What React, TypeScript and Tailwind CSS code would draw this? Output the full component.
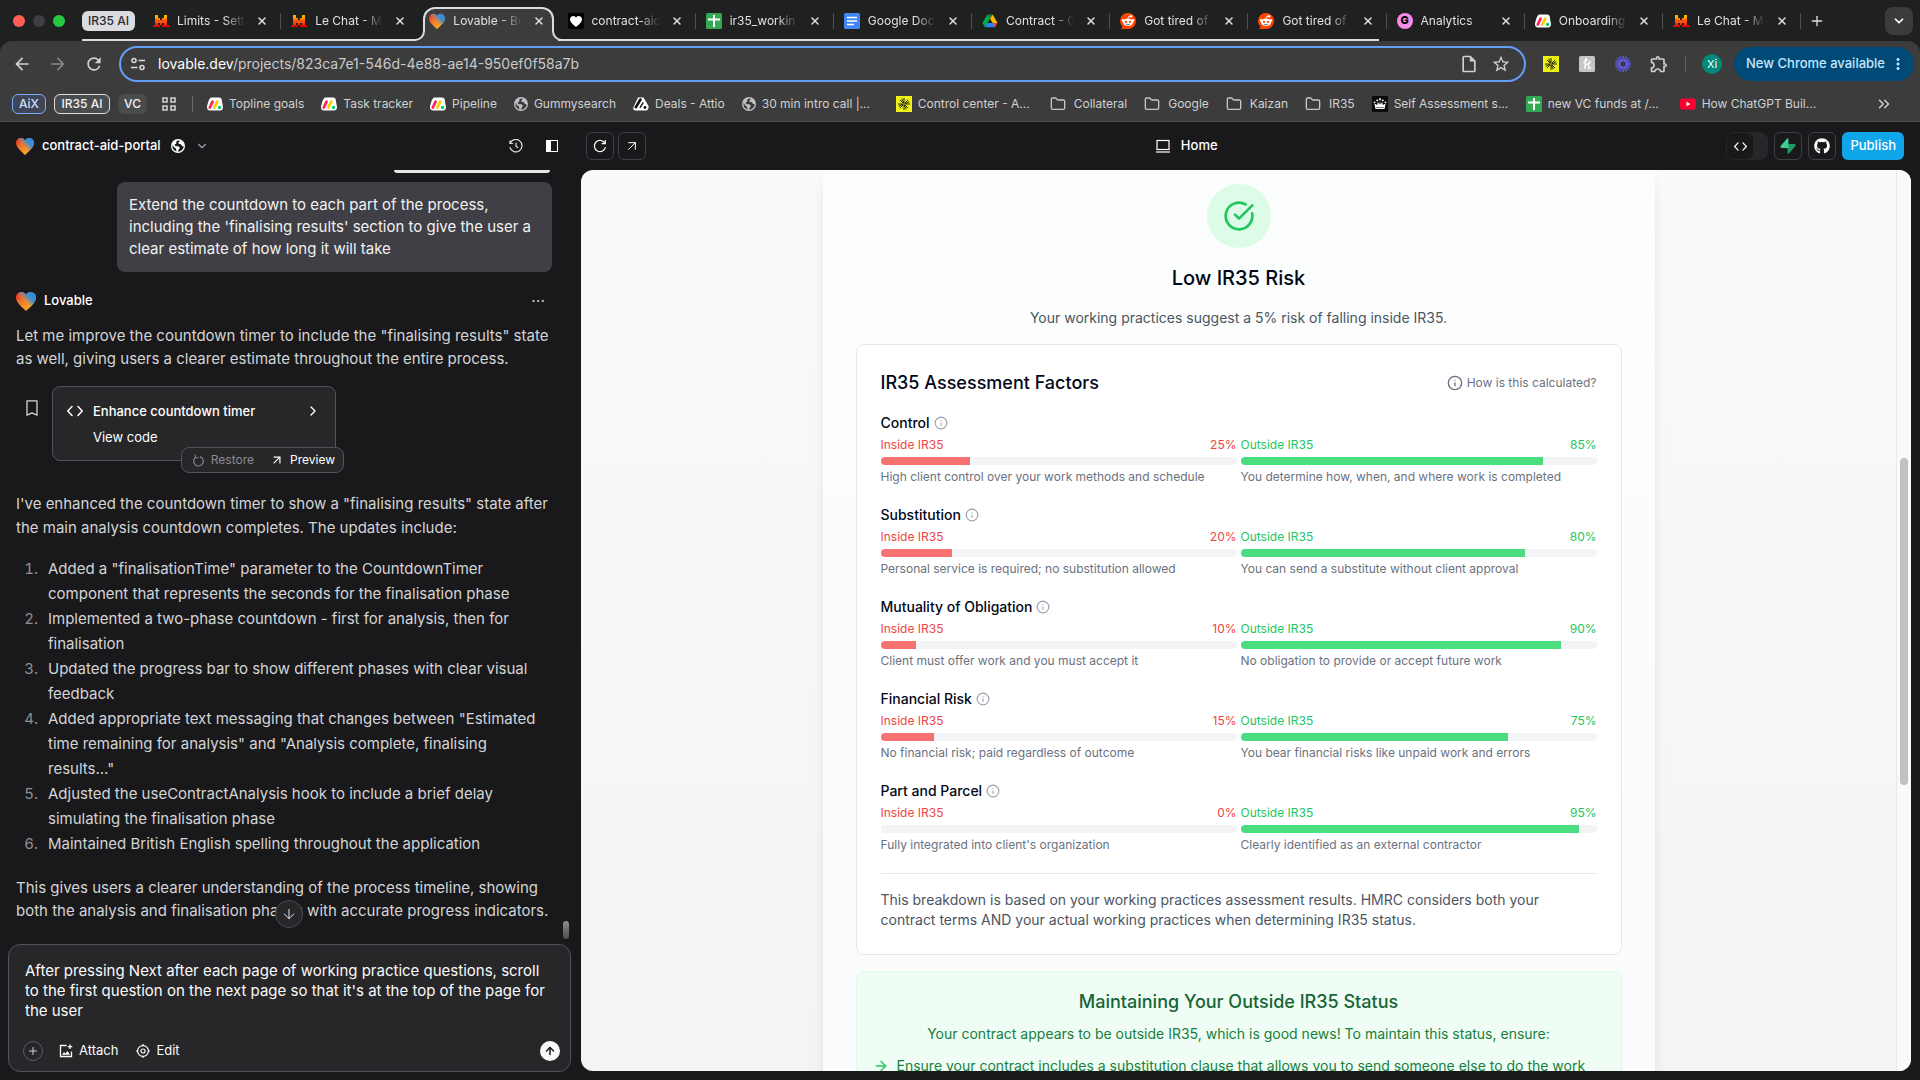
import type { ReactNode } from "react";
import {
  ArrowDown,
  ArrowRight,
  ArrowUp,
  ArrowUpRight,
  ChevronDown,
  ChevronRight,
  ChevronsRight,
  CircleCheckBig,
  Ellipsis,
  Folder,
  Info,
  Plus,
  X,
} from "lucide-react";
import { FaGithub } from "react-icons/fa";
import {
  MdArrowBack,
  MdArrowForward,
  MdMoreVert,
  MdOutlineExtension,
  MdOutlineInsertDriveFile,
  MdRefresh,
  MdStarBorder,
} from "react-icons/md";

/* ---------- favicons & logos ---------- */

function MistralIcon() {
  return (
    <svg viewBox="0 0 16 16" className="size-4 shrink-0" shapeRendering="crispEdges" aria-hidden="true">
      <path fill="#ffb000" d="M2 2h3v3H2zM11 2h3v3h-3z" />
      <path fill="#ff8205" d="M2 5h5v2H2zM9 5h5v2H9z" />
      <path fill="#fa500f" d="M2 7h12v3H2z" />
      <path fill="#e9370f" d="M2 10h3v2H2zM7 10h2v2H7zM11 10h3v2h-3z" />
      <path fill="#e10500" d="M0 12h7v2H0zM9 12h7v2H9z" />
    </svg>
  );
}

function LovableIcon({ className }: { className: string }) {
  return (
    <svg viewBox="0 0 20 20" className={className} aria-hidden="true">
      <defs>
        <linearGradient id="lov-a" x1="0.1" y1="0.1" x2="0.6" y2="0.9">
          <stop offset="0" stopColor="#e8301f" />
          <stop offset="0.4" stopColor="#f2702c" />
          <stop offset="1" stopColor="#f9a825" />
        </linearGradient>
        <linearGradient id="lov-b" x1="0.95" y1="0.2" x2="0.45" y2="0.65">
          <stop offset="0" stopColor="#2b8ae0" />
          <stop offset="0.45" stopColor="#4f8ec4" />
          <stop offset="1" stopColor="#f09a3a" stopOpacity="0" />
        </linearGradient>
      </defs>
      <path fill="url(#lov-a)" d="M5.5 1C8 1 9.3 2.400 10 4c.7-1.600 2-3 4.500-3C17.500 1 20 3.300 20 6.500c0 5-6 10-10 13.500C6 16.500 0 11.500 0 6.500 0 3.300 2.500 1 5.500 1z" />
      <path fill="url(#lov-b)" d="M5.5 1C8 1 9.3 2.400 10 4c.7-1.600 2-3 4.500-3C17.500 1 20 3.300 20 6.500c0 5-6 10-10 13.500C6 16.500 0 11.500 0 6.500 0 3.300 2.500 1 5.500 1z" />
    </svg>
  );
}

function GlobeIcon({ className }: { className: string }) {
  return (
    <svg viewBox="0 0 14 14" className={className} aria-hidden="true">
      <path
        fill="currentColor"
        fillRule="evenodd"
        d="M7 0a7 7 0 1 1 0 14A7 7 0 0 1 7 0zM7.600 1.300 5.200 2.600 5.400 4.400 3.600 5.600 4.400 7.200 7.400 7.200 8.800 8.600 8 10.400 6.600 12.600C9.800 12.800 12.400 10.600 12.700 7.600L10.600 6.800 10.200 5.200 8 5 7.200 3.600 8.800 2.600zM1.500 8.200 1.700 5.600 3 8.200 5 9.400 5.400 12.400C3.400 11.800 1.800 10.200 1.500 8.200z"
      />
    </svg>
  );
}

function HeartBoxIcon() {
  return (
    <svg viewBox="0 0 16 16" className="size-4 shrink-0" aria-hidden="true">
      <rect width="16" height="16" rx="2" fill="#000" />
      <path fill="#fff" d="M5.300 3C6.700 3 7.600 3.800 8 4.700 8.400 3.800 9.300 3 10.700 3 12.400 3 14 4.400 14 6.400c0 3-3.600 5.200-6 7.600-2.400-2.400-6-4.600-6-7.600C2 4.400 3.600 3 5.300 3z" />
    </svg>
  );
}

function SheetsIcon() {
  return (
    <svg viewBox="0 0 16 16" className="size-4 shrink-0" aria-hidden="true">
      <rect width="16" height="16" rx="1.500" fill="#34a853" />
      <path d="M2 6.500h12M8 2v12" stroke="#fff" strokeWidth="2" />
    </svg>
  );
}

function DocsIcon() {
  return (
    <svg viewBox="0 0 16 16" className="size-4 shrink-0" aria-hidden="true">
      <rect width="16" height="16" rx="1.500" fill="#4285f4" />
      <path d="M3 4.500h10M3 8h10M3 11.500h7" stroke="#fff" strokeWidth="1.600" />
    </svg>
  );
}

function DriveIcon() {
  return (
    <svg viewBox="0 0 16 16" className="size-4 shrink-0" aria-hidden="true">
      <path fill="#00ac47" d="M5.300 1.500h0L.5 10l2.400 4.200L8 5.800z" />
      <path fill="#188038" d="M5.300 1.500h5.400L8 6z" />
      <path fill="#ffba00" d="M10.700 1.500 15.500 10h-4.800L8 5.800z" />
      <path fill="#2684fc" d="M5.300 10h7.900L13 14.200H3z" />
      <path fill="#ea4335" d="M10.700 10h4.800l-2.500 4.200z" />
    </svg>
  );
}

function RedditIcon() {
  return (
    <svg viewBox="0 0 16 16" className="size-4 shrink-0" aria-hidden="true">
      <path fill="#ff4500" d="M8 0a8 8 0 1 1 0 16H1l1.500-2.300A8 8 0 0 1 8 0z" />
      <ellipse cx="8" cy="9.300" rx="5" ry="3.700" fill="#fff" />
      <circle cx="3.200" cy="7.500" r="1.400" fill="#fff" />
      <circle cx="12.800" cy="7.500" r="1.400" fill="#fff" />
      <circle cx="11" cy="3.300" r="1.200" fill="#fff" />
      <path d="M8 5.800 8.800 3l2 .3" stroke="#fff" strokeWidth=".7" fill="none" />
      <circle cx="6" cy="8.900" r="1.100" fill="#ff4500" />
      <circle cx="10" cy="8.900" r="1.100" fill="#ff4500" />
      <path d="M6 11.200c1 .8 3 .8 4 0" stroke="#333" strokeWidth=".7" fill="none" />
    </svg>
  );
}

function AnalyticsIcon() {
  return (
    <span className="flex size-4 shrink-0 items-center justify-center rounded-full bg-[#f58ee6] text-[11px] leading-none font-extrabold text-black">
      G
    </span>
  );
}

function MondayIcon() {
  return (
    <svg viewBox="0 0 16 16" className="size-4 shrink-0" aria-hidden="true">
      <path fill="#fff" d="M4.500 1.500h7.500c2 0 3 1.500 3 4l1 5.500c0 2-1 3.500-3 3.500H3c-2 0-3.200-1.500-3-3.500.4-2.500 2-9.500 4.500-9.500z" />
      <path d="m2.800 11.500 2.800-5.800" stroke="#fb275d" strokeWidth="2.800" strokeLinecap="round" />
      <path d="m7.400 11.500 2.800-5.800" stroke="#fc0" strokeWidth="2.800" strokeLinecap="round" />
      <circle cx="12.600" cy="11.400" r="1.700" fill="#00ca72" />
    </svg>
  );
}

function AttioIcon() {
  return (
    <svg viewBox="0 0 16 16" className="size-4 shrink-0" aria-hidden="true">
      <path fill="#fff" d="M5 1.500h5.500l5 8.500c.5 1.500-.5 4.500-2.500 4.500H2.500C.8 14.500 0 13 .3 11.500z" />
      <path d="M7.500 3.500 2.800 11.200" stroke="#111" strokeWidth="2.600" fill="none" strokeLinecap="round" />
      <path d="M10 6.800 7.200 11.400" stroke="#111" strokeWidth="1.400" fill="none" strokeLinecap="round" />
      <circle cx="12" cy="11.500" r="1.400" fill="#111" />
    </svg>
  );
}

function BurstIcon() {
  return (
    <svg viewBox="0 0 16 16" className="size-4 shrink-0" aria-hidden="true">
      <rect width="16" height="16" fill="#eef216" />
      <path d="M8 2v12M2 8h12M3.800 3.800l8.400 8.400M12.200 3.800l-8.400 8.400M5.800 2.600l4.400 10.800M2.600 10.200l10.800-4.400" stroke="#111" strokeWidth=".9" />
      <circle cx="8" cy="8" r="1.200" fill="#8a8c14" />
    </svg>
  );
}

function CrownIcon() {
  return (
    <svg viewBox="0 0 16 16" className="size-4 shrink-0" aria-hidden="true">
      <rect width="16" height="16" fill="#0b0c0c" />
      <path fill="#fff" d="M3.500 13 2.400 7.600 5.200 9 5.800 6l1.600 2.500L8 5l.6 3.500L10.200 6l.6 3 2.800-1.400L12.500 13z" />
      <g fill="#fff">
        <circle cx="8" cy="3.300" r="1.100" />
        <circle cx="5.200" cy="4.400" r=".9" />
        <circle cx="10.800" cy="4.400" r=".9" />
        <circle cx="2.500" cy="6.300" r=".9" />
        <circle cx="13.500" cy="6.300" r=".9" />
      </g>
      <path d="M4 11.600h8" stroke="#0b0c0c" strokeWidth=".6" />
    </svg>
  );
}

function YoutubeIcon() {
  return (
    <svg viewBox="0 0 16 16" className="size-4 shrink-0" aria-hidden="true">
      <rect y="2.500" width="16" height="11" rx="2.800" fill="#ff0033" />
      <path fill="#fff" d="m6.500 5.800 4 2.200-4 2.200z" />
    </svg>
  );
}

function HoneyIcon() {
  return (
    <svg viewBox="0 0 16 16" className="size-4 shrink-0" aria-hidden="true">
      <rect width="16" height="16" rx="1.500" fill="#c4c4c4" />
      <path d="M4.200 6.500C6.500 6 8 4.500 7.800 3.200 7.600 2.200 6.300 2.600 6.200 5L5.800 13C6.200 10 7.300 7.800 8.800 7.800 10.300 7.800 8.800 12.500 10.200 12.500 11 12.500 11.300 12 11.500 11.500M8.800 7.800C10.600 7.400 11.600 6 10.600 5" stroke="#fff" strokeWidth="1.200" fill="none" strokeLinecap="round" />
    </svg>
  );
}

function LoomIcon() {
  return (
    <svg viewBox="0 0 16 16" className="size-4 shrink-0" aria-hidden="true">
      <path
        d="M8 0v5M8 11v5M0 8h5M11 8h5M2.300 2.300l3.600 3.600M10.100 10.100l3.600 3.600M13.700 2.300l-3.600 3.600M5.900 10.100l-3.600 3.600M4.900.6l1.900 4.600M9.200 10.800l1.900 4.600M15.400 4.900l-4.600 1.900M5.200 9.200.6 11.100M11.100.6 9.200 5.200M6.800 10.800l-1.900 4.600M.6 4.900l4.600 1.900M10.800 9.200l4.600 1.900"
        stroke="#625df5"
        strokeWidth="1.300"
      />
      <circle cx="8" cy="8" r="3.400" stroke="#625df5" strokeWidth="1.200" fill="none" />
    </svg>
  );
}

function SiteInfoIcon() {
  return (
    <svg viewBox="0 0 16 16" className="size-4 shrink-0" fill="none" stroke="#dcdcdc" strokeWidth="1.500" aria-hidden="true">
      <circle cx="4" cy="4.500" r="2" />
      <path d="M8.500 4.500H15M1 11.500h6.500" />
      <circle cx="12" cy="11.500" r="2" />
    </svg>
  );
}

function AppsIcon() {
  return (
    <svg viewBox="0 0 14 14" className="size-[14px]" fill="none" stroke="currentColor" strokeWidth="1.600" aria-hidden="true">
      <path d="M1 1h4v4H1zM9 1h4v4H9zM1 9h4v4H1zM9 9h4v4H9z" />
    </svg>
  );
}

function SupabaseIcon() {
  return (
    <svg viewBox="0 0 16 16" className="size-4 shrink-0" aria-hidden="true">
      <path fill="#1f9a63" d="M8.800 15.600c-.4.500-1.200.2-1.200-.4L7.500 6h6.700c1.200 0 1.900 1.400 1.100 2.300z" />
      <path fill="#3ecf8e" d="M7.200.4c.4-.5 1.200-.2 1.200.4l.1 9.200H1.800C.6 10 0 8.600.7 7.700z" />
    </svg>
  );
}

function CodeIcon({ className }: { className: string }) {
  return (
    <svg viewBox="0 0 16 16" className={className} fill="none" stroke="currentColor" strokeWidth="1.500" strokeLinecap="round" strokeLinejoin="round" aria-hidden="true">
      <path d="M5 3.500.8 8 5 12.500M11 3.500 15.200 8 11 12.500" />
    </svg>
  );
}

function HistoryIcon() {
  return (
    <svg viewBox="0 0 14 14" className="size-[14px]" fill="none" stroke="currentColor" strokeWidth="1.200" aria-hidden="true">
      <path d="M1 4.500A6.200 6.200 0 1 1 .8 8.200M1 1.500v3h3M7 3.800V7.200l2.200 1.600" />
    </svg>
  );
}

function PanelIcon() {
  return (
    <svg viewBox="0 0 14 14" className="size-[14px]" aria-hidden="true">
      <rect x="1.500" y="1.500" width="11" height="11" fill="none" stroke="#fff" strokeWidth="1" />
      <path d="M1 1h5v12H1z" fill="#fff" />
    </svg>
  );
}

function ReloadIcon() {
  return (
    <svg viewBox="0 0 14 14" className="size-[14px]" fill="none" stroke="currentColor" strokeWidth="1.200" aria-hidden="true">
      <path d="M12 4.500A5.600 5.600 0 1 0 12.500 8M12.300 1v3.700H8.600" />
    </svg>
  );
}

function LaptopIcon() {
  return (
    <svg viewBox="0 0 16 16" className="size-4" fill="none" stroke="currentColor" strokeWidth="1.200" aria-hidden="true">
      <rect x="2" y="2.500" width="12" height="9" />
      <path d="M1 14h14" />
    </svg>
  );
}

function BookmarkIcon() {
  return (
    <svg viewBox="0 0 12 16" className="h-4 w-3" fill="none" stroke="currentColor" strokeWidth="1.300" strokeLinejoin="round" aria-hidden="true">
      <path d="M1 .8h10v14.400l-5-2.400-5 2.400z" />
    </svg>
  );
}

function RestoreIcon() {
  return (
    <svg viewBox="0 0 14 14" className="size-[13px]" fill="none" stroke="currentColor" strokeWidth="1.200" aria-hidden="true">
      <path d="M8.500 2.800a5.200 5.200 0 1 1-4.600.8M3.500.6v3.400h3.400" />
    </svg>
  );
}

function AttachIcon() {
  return (
    <svg viewBox="0 0 14 14" className="size-[14px]" fill="none" stroke="currentColor" strokeWidth="1.300" aria-hidden="true">
      <path d="M7.500 1.500H1.500v11h11V7.500M11 .5v4.500M8.800 2.700h4.500" />
      <path d="M3 10.800 5 8l1.500 1.500L8.500 7l2.500 3.800z" fill="currentColor" stroke="none" />
    </svg>
  );
}

function EditTargetIcon() {
  return (
    <svg viewBox="0 0 14 14" className="size-[14px]" fill="none" stroke="currentColor" strokeWidth="1.200" aria-hidden="true">
      <circle cx="7" cy="7" r="5.400" />
      <circle cx="7" cy="7" r="2" />
      <path d="M7 0v2M7 12v2M0 7h2M12 7h2" />
    </svg>
  );
}

/* ---------- data ---------- */

type TabItem = { title: string; icon: ReactNode; grouped: boolean; active?: boolean };

const tabs: TabItem[] = [
  { title: "Limits - Sett", icon: <MistralIcon />, grouped: true },
  { title: "Le Chat - Mi", icon: <MistralIcon />, grouped: true },
  { title: "Lovable - Bu", icon: <LovableIcon className="size-4 shrink-0" />, grouped: true, active: true },
  { title: "contract-aid", icon: <HeartBoxIcon />, grouped: true },
  { title: "ir35_workin", icon: <SheetsIcon />, grouped: true },
  { title: "Google Doc", icon: <DocsIcon />, grouped: true },
  { title: "Contract - G", icon: <DriveIcon />, grouped: true },
  { title: "Got tired of", icon: <RedditIcon />, grouped: true },
  { title: "Got tired of", icon: <RedditIcon />, grouped: true },
  { title: "Analytics", icon: <AnalyticsIcon />, grouped: false },
  { title: "Onboarding", icon: <MondayIcon />, grouped: false },
  { title: "Le Chat - M", icon: <MistralIcon />, grouped: false },
];

const folderIcon = <Folder className="mr-[2px] size-4 shrink-0 text-[#c7c7c7]" strokeWidth={2} />;
const globeIcon = <GlobeIcon className="size-[14px] shrink-0 text-[#bdc1c6]" />;

const bookmarks: { title: string; icon: ReactNode; long?: boolean }[] = [
  { title: "Topline goals", icon: <MondayIcon /> },
  { title: "Task tracker", icon: <MondayIcon /> },
  { title: "Pipeline", icon: <MondayIcon /> },
  { title: "Gummysearch", icon: globeIcon },
  { title: "Deals - Attio", icon: <AttioIcon /> },
  { title: "30 min intro call |...", icon: globeIcon, long: true },
  { title: "Control center - A...", icon: <BurstIcon />, long: true },
  { title: "Collateral", icon: folderIcon },
  { title: "Google", icon: folderIcon },
  { title: "Kaizan", icon: folderIcon },
  { title: "IR35", icon: folderIcon },
  { title: "Self Assessment s...", icon: <CrownIcon />, long: true },
  { title: "new VC funds at /...", icon: <SheetsIcon />, long: true },
  { title: "How ChatGPT Buil...", icon: <YoutubeIcon />, long: true },
];

const updates = [
  'Added a "finalisationTime" parameter to the CountdownTimer component that represents the seconds for the finalisation phase',
  "Implemented a two-phase countdown - first for analysis, then for finalisation",
  "Updated the progress bar to show different phases with clear visual feedback",
  'Added appropriate text messaging that changes between "Estimated time remaining for analysis" and "Analysis complete, finalising results..."',
  "Adjusted the useContractAnalysis hook to include a brief delay simulating the finalisation phase",
  "Maintained British English spelling throughout the application",
];

const factors = [
  { name: "Control", inside: 25, outside: 85, insideText: "High client control over your work methods and schedule", outsideText: "You determine how, when, and where work is completed" },
  { name: "Substitution", inside: 20, outside: 80, insideText: "Personal service is required; no substitution allowed", outsideText: "You can send a substitute without client approval" },
  { name: "Mutuality of Obligation", inside: 10, outside: 90, insideText: "Client must offer work and you must accept it", outsideText: "No obligation to provide or accept future work" },
  { name: "Financial Risk", inside: 15, outside: 75, insideText: "No financial risk; paid regardless of outcome", outsideText: "You bear financial risks like unpaid work and errors" },
  { name: "Part and Parcel", inside: 0, outside: 95, insideText: "Fully integrated into client's organization", outsideText: "Clearly identified as an external contractor" },
];

/* ---------- browser chrome ---------- */

function Tab({ tab, divider, groupEnd }: { tab: TabItem; divider: boolean; groupEnd: boolean }) {
  return (
    <div className="relative flex h-full min-w-0 flex-1">
      {tab.grouped && !tab.active && (
        <span className={`absolute bottom-0 left-0 h-[2px] bg-[#dadce0] ${groupEnd ? "right-2" : "right-0"}`} />
      )}
      {tab.active && (
        <>
          <div className="absolute inset-x-1 top-[7px] bottom-0 rounded-t-xl border-2 border-b-0 border-[#dadce0] bg-[#3c3c3c]" />
          <svg viewBox="0 0 10 10" className="absolute bottom-0 -left-1 size-[10px]" aria-hidden="true">
            <path d="M0 10h10V0h-1c0 5-4 9-9 9z" fill="#3c3c3c" />
            <path d="M0 9c5 0 9-4 9-9" fill="none" stroke="#dadce0" strokeWidth="2" />
          </svg>
          <svg viewBox="0 0 10 10" className="absolute -right-1 bottom-0 size-[10px]" aria-hidden="true">
            <path d="M10 10H0V0h1c0 5 4 9 9 9z" fill="#3c3c3c" />
            <path d="M10 9C5 9 1 5 1 0" fill="none" stroke="#dadce0" strokeWidth="2" />
          </svg>
        </>
      )}
      <div className="relative flex w-full items-center gap-2 pr-[13px] pl-[10px]">
        {tab.icon}
        <button className="min-w-0 flex-1 overflow-hidden text-left text-xs whitespace-nowrap text-[#dfe0e0] [mask-image:linear-gradient(to_right,black_70%,transparent)]">
          {tab.title}
        </button>
        <button aria-label={`Close ${tab.title}`} className="shrink-0 pl-[3px] text-[#dfe0e0]">
          <X className="size-3" strokeWidth={3} />
        </button>
      </div>
      {divider && <span className="absolute top-[13px] right-0 h-4 w-px bg-[#4d4f4f]" />}
    </div>
  );
}

function TabStrip() {
  return (
    <div className="flex h-[41px] shrink-0 items-center bg-[#1f2020]">
      <div className="flex w-[82px] shrink-0 items-center gap-2 pl-[13px]">
        <span className="size-3 rounded-full bg-[#ff5f57]" />
        <span className="size-3 rounded-full bg-[#3f3f43]" />
        <span className="size-3 rounded-full bg-[#28c840]" />
      </div>
      <div className="flex h-full w-[61px] shrink-0 items-center border-b-2 border-[#dadce0] pt-[2px]">
        <button className="h-5 w-[53px] rounded-md bg-[#dadce0] text-xs leading-5 font-medium text-[#2b2c2e]">IR35 AI</button>
      </div>
      <div className="flex h-full min-w-0 flex-1">
        {tabs.map((tab, i) => (
          <Tab
            key={i}
            tab={tab}
            divider={i !== 1 && i !== 2}
            groupEnd={tab.grouped && !tabs[i + 1]?.grouped}
          />
        ))}
      </div>
      <div className="flex w-[119px] shrink-0 items-center justify-between pr-[7px] pl-2">
        <button aria-label="New tab" className="text-[#dfe0e0]">
          <Plus className="size-4" strokeWidth={2} />
        </button>
        <button aria-label="Search tabs" className="flex size-7 items-center justify-center rounded-lg bg-[#3a3b3b] text-white">
          <ChevronDown className="size-[14px]" strokeWidth={3} />
        </button>
      </div>
    </div>
  );
}

function Toolbar() {
  return (
    <div className="flex h-[46px] shrink-0 items-center pr-[6px] pl-3">
      <div className="flex w-[107px] shrink-0 items-center gap-4 text-[#d0d0d0]">
        <button aria-label="Back"><MdArrowBack className="size-5" /></button>
        <button aria-label="Forward" className="text-[#858585]"><MdArrowForward className="size-5" /></button>
        <button aria-label="Reload"><MdRefresh className="size-5" /></button>
      </div>
      <div className="flex h-9 min-w-0 flex-1 items-center rounded-full border-2 border-[#669df6] pr-[13px] pl-[9px]">
        <SiteInfoIcon />
        <div className="min-w-0 flex-1 truncate pl-3 text-sm text-[#c9cacb]">
          <span className="text-white">lovable.dev</span>/projects/823ca7e1-546d-4e88-ae14-950ef0f58a7b
        </div>
        <div className="flex items-center gap-3 text-[#cfcfcf]">
          <button aria-label="Page"><MdOutlineInsertDriveFile className="size-5" /></button>
          <button aria-label="Bookmark this tab"><MdStarBorder className="size-5" /></button>
        </div>
      </div>
      <div className="flex items-center gap-5 pl-[17px] text-[#cfcfcf]">
        <BurstIcon />
        <HoneyIcon />
        <LoomIcon />
        <button aria-label="Extensions" className="-ml-[2px]"><MdOutlineExtension className="size-5" /></button>
      </div>
      <span className="ml-4 h-4 w-px bg-[#5f6061]" />
      <span className="mx-4 flex size-5 items-center justify-center rounded-full bg-[#00897b] text-[11px] text-white">Xi</span>
      <button className="-ml-1 flex h-[34px] items-center rounded-full bg-[#004a77] pr-[7px] pl-3 text-[13px] font-medium whitespace-nowrap text-[#c2e7ff]">
        New Chrome available
        <MdMoreVert className="ml-1 size-[18px]" />
      </button>
    </div>
  );
}

function BookmarksBar() {
  return (
    <div className="flex h-[35px] shrink-0 items-center overflow-hidden border-b border-[#4f5052] pl-3 text-xs text-[#d0d1d2]">
      <div className="flex shrink-0 items-center gap-2 font-medium">
        <button className="h-5 w-[34px] rounded-md border border-[#7cacf8] bg-[#3d4557] leading-[18px] text-[#cfe0fc]">AiX</button>
        <button className="h-5 w-14 rounded-md border border-[#dadce0] bg-[#4b4c4f] leading-[18px] text-[#f1f3f4]">IR35 AI</button>
        <button className="h-5 w-[29px] rounded-md bg-[#4a4b4d] leading-5 text-[#f1f3f4]">VC</button>
        <button aria-label="Apps" className="ml-[7px]"><AppsIcon /></button>
      </div>
      <span className="mr-[14px] ml-4 h-4 w-px shrink-0 bg-[#6a6b6d]" />
      <div className="flex min-w-0 flex-1 items-center gap-[17px]">
        {bookmarks.map((b) => (
          <a key={b.title} href="#" className={`flex shrink-0 items-center gap-[6px] whitespace-nowrap ${b.long ? "w-[137px]" : ""}`}>
            {b.icon}
            {b.title}
          </a>
        ))}
      </div>
      <button aria-label="More bookmarks" className="mr-[27px] shrink-0"><ChevronsRight className="size-[18px]" strokeWidth={2} /></button>
    </div>
  );
}

/* ---------- chat panel ---------- */

function ChatHeader() {
  return (
    <div className="flex h-12 shrink-0 items-center pr-[22px] pl-4 text-white">
      <LovableIcon className="size-[18px]" />
      <span className="pl-2 text-[13px] font-medium">contract-aid-portal</span>
      <GlobeIcon className="ml-[10px] size-[14px]" />
      <ChevronDown className="ml-[10px] size-[14px] text-zinc-400" strokeWidth={2} />
      <div className="ml-auto flex items-center gap-[22px]">
        <button aria-label="History" className="text-zinc-200"><HistoryIcon /></button>
        <button aria-label="Toggle panel"><PanelIcon /></button>
      </div>
    </div>
  );
}

function ChatPanel() {
  return (
    <aside className="flex w-[581px] shrink-0 flex-col pb-2">
      <ChatHeader />
      <div className="relative flex min-h-0 flex-1 flex-col overflow-hidden pr-[29px] pl-4 text-[15px] text-[#d4d4d6]">
        <div className="mr-[2px] h-[3px] w-[156px] shrink-0 self-end rounded-b-md bg-[#e6e6e6]" />
        <div className="mt-[9px] w-[435px] self-end rounded-lg bg-[#3f3f45] p-3 leading-[22px] text-[#f2f2f2]">
          Extend the countdown to each part of the process, including the 'finalising results' section to give the user a clear estimate of how long it will take
        </div>

        <div className="mt-[19px] flex items-center text-white">
          <LovableIcon className="size-5" />
          <span className="pl-2 text-[13px] font-medium">Lovable</span>
          <button aria-label="More" className="mr-[6px] ml-auto text-zinc-300"><Ellipsis className="size-4" strokeWidth={1.5} /></button>
        </div>

        <p className="mt-[13px] leading-[23px]">
          Let me improve the countdown timer to include the "finalising results" state as well, giving users a clearer estimate throughout the entire process.
        </p>

        {/* Edit card */}
        <div className="mt-4 flex text-white">
          <button aria-label="Bookmark" className="mt-[14px] mr-[14px] ml-[10px] h-4 text-zinc-300"><BookmarkIcon /></button>
          <div className="relative h-[75px] w-[284px] rounded-lg border border-[#52525b] bg-[#27272a] text-[13px]">
            <div className="flex items-center pt-3 pr-[14px] pl-[14px] leading-6 font-medium">
              <CodeIcon className="size-4" />
              <span className="pl-[10px]">Enhance countdown timer</span>
              <ChevronRight className="ml-auto size-4" strokeWidth={2} />
            </div>
            <a href="#" className="block pt-[2px] pl-10 leading-6">View code</a>
            <div className="absolute top-[60px] -right-[9px] flex h-[26px] items-center gap-4 rounded-lg border border-[#52525b] bg-[#27272a] pr-2 pl-[10px] text-xs">
              <button className="flex items-center gap-[6px] text-[#8a8a91]"><RestoreIcon />Restore</button>
              <button className="flex items-center gap-[6px]"><ArrowUpRight className="size-[14px]" strokeWidth={2} />Preview</button>
            </div>
          </div>
        </div>

        <p className="mt-[31px] leading-6">
          I've enhanced the countdown timer to show a "finalising results" state after the main analysis countdown completes. The updates include:
        </p>

        <ol className="mt-4 list-decimal pr-4 pl-[26px] leading-[25px] marker:text-[#8f8f96]">
          {updates.map((u) => (
            <li key={u} className="pl-[6px]">{u}</li>
          ))}
        </ol>

        <p className="mt-5 leading-[23px]">
          This gives users a clearer understanding of the process timeline, showing both the analysis and finalisation phases with accurate progress indicators.
        </p>

        <button aria-label="Scroll to bottom" className="absolute bottom-4 left-[275px] flex size-7 items-center justify-center rounded-full border border-[#4a4a52] bg-[#27272a] text-zinc-200">
          <ArrowDown className="size-4" strokeWidth={1.5} />
        </button>
        <span className="absolute right-3 bottom-[5px] h-[18px] w-[6px] rounded-full bg-gradient-to-b from-[#8f8f8f] to-[#4d4d4d]" />
      </div>

      {/* Prompt box */}
      <div className="mr-[10px] ml-2 flex shrink-0 flex-col rounded-xl border border-[#52525b] bg-[#27272a] px-4 text-[#fafafa]">
        <textarea
          aria-label="Message"
          rows={3}
          className="mt-4 resize-none overflow-hidden bg-transparent text-[15px] leading-5 outline-none"
          defaultValue="After pressing Next after each page of working practice questions, scroll to the first question on the next page so that it's at the top of the page for the user"
        />
        <div className="-ml-[2px] flex items-center pt-5 pb-[10px] text-[13px]">
          <button aria-label="Add" className="flex size-5 items-center justify-center rounded-full border border-[#5b5b63] text-zinc-300"><Plus className="size-3" strokeWidth={2} /></button>
          <button className="ml-4 flex items-center gap-[6px]"><AttachIcon />Attach</button>
          <button className="ml-[18px] flex items-center gap-[6px]"><EditTargetIcon />Edit</button>
          <button aria-label="Send" className="mr-[-6px] ml-auto flex size-5 items-center justify-center rounded-full bg-[#fafafa] text-[#18181b]"><ArrowUp className="size-3" strokeWidth={3} /></button>
        </div>
      </div>
    </aside>
  );
}

/* ---------- preview ---------- */

function PreviewHeader() {
  return (
    <div className="flex h-12 shrink-0 items-center justify-between pr-[7px] pl-[5px] text-white">
      <div className="flex gap-1">
        <button aria-label="Refresh" className="flex size-7 items-center justify-center rounded-md border border-[#3f3f46]"><ReloadIcon /></button>
        <button aria-label="Open in new tab" className="flex size-7 items-center justify-center rounded-md border border-[#3f3f46]"><ArrowUpRight className="size-4" strokeWidth={1.5} /></button>
      </div>
      <div className="flex items-center gap-[10px] text-[13px] font-medium">
        <LaptopIcon />
        Home
      </div>
      <div className="flex items-center justify-end gap-[6px]">
        <button aria-label="Code view" className="flex h-7 w-[42px] items-center rounded-lg border border-[#27272a] bg-[#27272a]">
          <span className="flex h-[26px] w-[26px] items-center justify-center rounded-md bg-[#19191b]"><CodeIcon className="size-[13px]" /></span>
        </button>
        <button aria-label="Supabase" className="flex size-7 items-center justify-center rounded-md border border-[#3f3f46]"><SupabaseIcon /></button>
        <button aria-label="GitHub" className="flex size-7 items-center justify-center rounded-md border border-[#3f3f46]"><FaGithub className="size-4" /></button>
        <button className="h-7 rounded-md bg-[#0ea5e9] px-2 text-[13px] font-medium">Publish</button>
      </div>
    </div>
  );
}

function Meter({ label, value, text, tone }: { label: string; value: number; text: string; tone: "red" | "green" }) {
  return (
    <div>
      <div className={`flex justify-between text-xs leading-4 ${tone === "red" ? "text-[#ef4444]" : "text-[#22c55e]"}`}>
        <span>{label}</span>
        <span>{value}%</span>
      </div>
      <div className="mt-1 h-2 overflow-hidden rounded-full bg-[#f3f4f6]">
        <div className={`h-full ${tone === "red" ? "bg-[#f87171]" : "bg-[#4ade80]"}`} style={{ width: `${value}%` }} />
      </div>
      <p className="mt-1 text-xs leading-4 text-[#6b7280]">{text}</p>
    </div>
  );
}

function Preview() {
  return (
    <main className="flex min-w-0 flex-1 flex-col pr-[9px] pb-[9px]">
      <PreviewHeader />
      <div className="flex min-h-0 flex-1 overflow-hidden rounded-xl bg-gradient-to-b from-[#f8fafc] to-[#f3f4f6]">
        <div className="flex min-w-0 flex-1 flex-col overflow-hidden">
          <div className="mx-auto w-full max-w-[832px] shrink-0 bg-gradient-to-b from-[#fcfdfd] via-[#fbfdfb] to-[#fafbfd] px-[33px] pt-[14px] shadow-lg">
            <div className="flex flex-col items-center">
              <div className="flex size-16 items-center justify-center rounded-full bg-[#dcfce7]">
                <CircleCheckBig className="size-8 text-[#22c55e]" strokeWidth={2} />
              </div>
              <h1 className="mt-4 text-xl leading-7 font-medium text-[#020817]">Low IR35 Risk</h1>
              <p className="mt-4 text-sm leading-5 text-[#4b5563]">Your working practices suggest a 5% risk of falling inside IR35.</p>
            </div>

            <section className="mt-4 rounded-lg border border-[#e5e7eb] bg-white p-6">
              <div className="flex items-center justify-between">
                <h2 className="text-lg leading-7 font-medium text-[#020817]">IR35 Assessment Factors</h2>
                <button className="flex items-center gap-1 text-xs text-[#6b7280]">
                  <Info className="size-4" strokeWidth={2} />
                  How is this calculated?
                </button>
              </div>
              <div className="mt-4 flex flex-col gap-5">
                {factors.map((f) => (
                  <div key={f.name}>
                    <h3 className="flex items-center gap-1 pb-1 text-sm leading-5 font-medium text-[#020817]">
                      {f.name}
                      <Info className="size-[14px] text-[#9ca3af]" strokeWidth={2} />
                    </h3>
                    <div className="grid grid-cols-2 gap-1">
                      <Meter label="Inside IR35" value={f.inside} text={f.insideText} tone="red" />
                      <Meter label="Outside IR35" value={f.outside} text={f.outsideText} tone="green" />
                    </div>
                  </div>
                ))}
              </div>
              <p className="mt-5 border-t border-[#e5e7eb] pt-4 text-sm leading-5 text-[#4b5563]">
                This breakdown is based on your working practices assessment results. HMRC considers both your contract terms AND your actual working practices when determining IR35 status.
              </p>
            </section>

            <section className="mt-4 rounded-lg border border-[#dcfce7] bg-[#f0fdf4] px-4 pt-4 pb-6 text-[#15803d]">
              <h2 className="text-center text-lg leading-7 font-medium text-[#166534]">Maintaining Your Outside IR35 Status</h2>
              <p className="mt-2 text-center text-sm leading-5">Your contract appears to be outside IR35, which is good news! To maintain this status, ensure:</p>
              <ul className="mt-3 text-sm leading-5">
                <li className="flex items-start gap-2">
                  <ArrowRight className="mt-[2px] size-4 shrink-0 text-[#22c55e]" strokeWidth={2} />
                  Ensure your contract includes a substitution clause that allows you to send someone else to do the work
                </li>
              </ul>
            </section>
          </div>
        </div>
        <div className="flex w-[15px] shrink-0 flex-col items-center border-l border-[#e8e8e8] bg-[#fafafa] pt-[288px]">
          <span className="h-[327px] w-2 rounded-full bg-[#c1c1c1]" />
        </div>
      </div>
    </main>
  );
}

export default function App() {
  return (
    <div className="flex h-screen flex-col overflow-hidden bg-[#19191b] font-['Inter',sans-serif]">
      <div className="shrink-0 bg-[#1f2020]">
        <TabStrip />
        <div className="rounded-t-xl bg-[#3c3c3c]">
          <Toolbar />
          <BookmarksBar />
        </div>
      </div>
      <div className="flex min-h-0 flex-1">
        <ChatPanel />
        <Preview />
      </div>
    </div>
  );
}
